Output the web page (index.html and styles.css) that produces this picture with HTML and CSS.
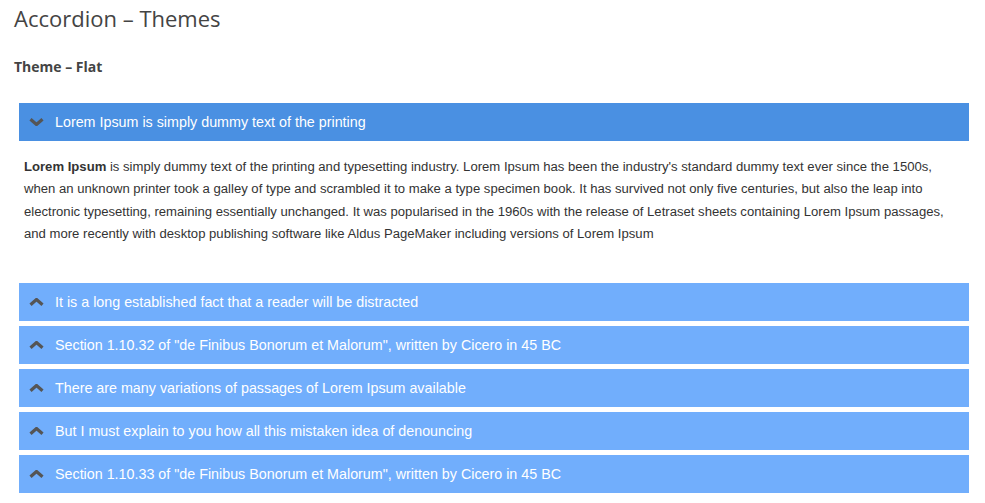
FILE: index.html
```html
<!DOCTYPE html>
<html>
<head>
<meta charset="utf-8">
<link rel="stylesheet" href="styles.css">
</head>
<body>
<div class="page">
  <h1 class="title">Accordion – Themes</h1>
  <h2 class="subtitle">Theme – Flat</h2>
  <div class="accordion">
    <div class="item open">
      <div class="head">
        <svg class="chev" viewBox="0 0 15 8" width="15" height="8"><polyline points="1.5,1.2 7.5,6.5 13.5,1.2" /></svg>
        <span>Lorem Ipsum is simply dummy text of the printing</span>
      </div>
      <div class="body">
        <p><strong>Lorem Ipsum</strong> is simply dummy text of the printing and typesetting industry. Lorem Ipsum has been the industry's standard dummy text ever since the 1500s, when an unknown printer took a galley of type and scrambled it to make a type specimen book. It has survived not only five centuries, but also the leap into electronic typesetting, remaining essentially unchanged. It was popularised in the 1960s with the release of Letraset sheets containing Lorem Ipsum passages, and more recently with desktop publishing software like Aldus PageMaker including versions of Lorem Ipsum</p>
      </div>
    </div>
    <div class="item">
      <div class="head">
        <svg class="chev" viewBox="0 0 15 8" width="15" height="8"><polyline points="1.5,6.8 7.5,1.5 13.5,6.8" /></svg>
        <span>It is a long established fact that a reader will be distracted</span>
      </div>
    </div>
    <div class="item">
      <div class="head">
        <svg class="chev" viewBox="0 0 15 8" width="15" height="8"><polyline points="1.5,6.8 7.5,1.5 13.5,6.8" /></svg>
        <span>Section 1.10.32 of "de Finibus Bonorum et Malorum", written by Cicero in 45 BC</span>
      </div>
    </div>
    <div class="item">
      <div class="head">
        <svg class="chev" viewBox="0 0 15 8" width="15" height="8"><polyline points="1.5,6.8 7.5,1.5 13.5,6.8" /></svg>
        <span>There are many variations of passages of Lorem Ipsum available</span>
      </div>
    </div>
    <div class="item">
      <div class="head">
        <svg class="chev" viewBox="0 0 15 8" width="15" height="8"><polyline points="1.5,6.8 7.5,1.5 13.5,6.8" /></svg>
        <span>But I must explain to you how all this mistaken idea of denouncing</span>
      </div>
    </div>
    <div class="item">
      <div class="head">
        <svg class="chev" viewBox="0 0 15 8" width="15" height="8"><polyline points="1.5,6.8 7.5,1.5 13.5,6.8" /></svg>
        <span>Section 1.10.33 of "de Finibus Bonorum et Malorum", written by Cicero in 45 BC</span>
      </div>
    </div>
  </div>
</div>
</body>
</html>
```

FILE: styles.css
```css
* { box-sizing: border-box; }
html, body { margin: 0; padding: 0; background: #fff; }
.page {
  padding: 0 16px 0 14px;
  font-family: "Open Sans", sans-serif;
  color: #444;
}
.title {
  margin: 0;
  padding-top: 3px;
  font-size: 22px;
  font-weight: 400;
  line-height: 30px;
  color: #444;
}
.subtitle {
  margin: 24px 0 0 0;
  font-size: 14px;
  font-weight: 700;
  line-height: 20px;
  color: #444;
}
.accordion {
  margin: 26px 0 0 5px;
  display: flex;
  flex-direction: column;
  gap: 5px;
}
.head {
  height: 38px;
  display: flex;
  align-items: center;
  padding-left: 10px;
  gap: 11px;
  background: #71aefc;
  color: #fff;
  font-family: "Liberation Sans", Arial, sans-serif;
  font-size: 14.3px;
}
.open .head { background: #4a90e2; }
.chev { flex: none; }
.chev polyline {
  fill: none;
  stroke: #555;
  stroke-width: 3.2;
  stroke-linecap: butt;
  stroke-linejoin: miter;
}
.body {
  padding: 15px 20px 32px 5px;
}
.body p {
  margin: 0;
  font-family: "Liberation Sans", Arial, sans-serif;
  font-size: 13.12px;
  line-height: 22.4px;
  color: #333;
}
.body strong { font-weight: 700; }
```
